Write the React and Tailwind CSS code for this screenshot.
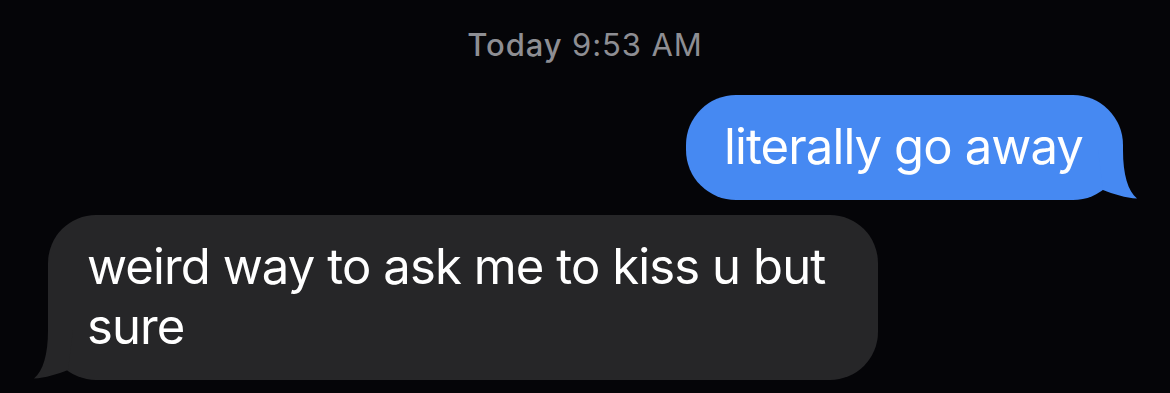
export default function App() {
  return (
    <div className="w-[1170px] h-[393px] overflow-hidden bg-[#050508] font-['Inter','Liberation_Sans',sans-serif] flex flex-col">
      <div className="pt-[25px] text-center text-[31px] leading-[40px] tracking-[0.9px] text-[#8e8e93]">
        <span className="font-medium">Today</span> 9:53 AM
      </div>

      <div className="mt-[30px] flex justify-end pr-[47px]">
        <div className="relative h-[105px] rounded-[50px] bg-[#4689f2] pl-[38px] pr-[40px] flex items-center">
          <span className="text-[49px] leading-[60px] tracking-[-0.9px] text-white pb-[2px]">literally go away</span>
          <svg className="absolute right-[-17px] bottom-0" width="42" height="50" viewBox="0 0 42 50">
            <path d="M25 0 C25 25 30 41 39 48.5 C28 48 15 44 5 40 L0 0 Z" fill="#4689f2" />
          </svg>
        </div>
      </div>

      <div className="mt-[15px] flex pl-[48px]">
        <div className="relative w-[830px] h-[165px] rounded-[48px] bg-[#262628] pl-[39px] pr-[20px] pt-[22px]">
          <p className="text-[49px] leading-[60px] tracking-[-0.9px] text-white">weird way to ask me to kiss u but sure</p>
          <svg className="absolute left-[-17px] bottom-0" width="42" height="50" viewBox="0 0 42 50">
            <path d="M17 0 C17 25 12 41 3 48.5 C14 48 27 44 37 40 L42 0 Z" fill="#262628" />
          </svg>
        </div>
      </div>
    </div>
  );
}
